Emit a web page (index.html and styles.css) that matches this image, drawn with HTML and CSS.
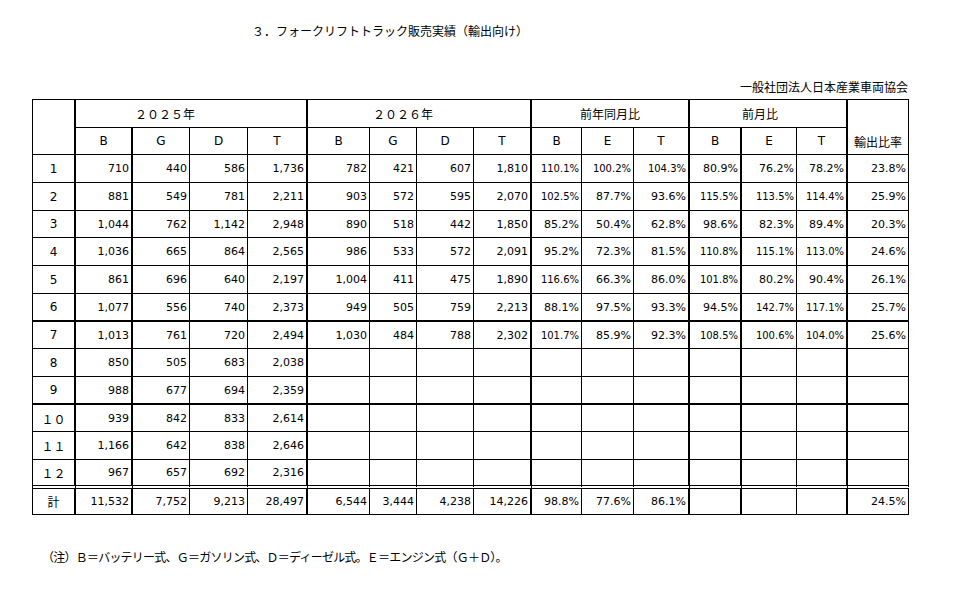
FILE: index.html
```html
<!DOCTYPE html>
<html lang="ja">
<head>
<meta charset="utf-8">
<title>フォークリフトトラック販売実績（輸出向け）</title>
<link rel="stylesheet" href="styles.css">
</head>
<body>
<div class="page">
  <h1 class="title">３．フォークリフトトラック販売実績（輸出向け）</h1>
  <div class="source">一般社団法人日本産業車両協会</div>
  <table class="sales">
    <colgroup>
      <col class="w43"><col class="w57"><col class="w57"><col class="w58"><col class="w60">
      <col class="w62"><col class="w47"><col class="w57"><col class="w58">
      <col class="w50"><col class="w52"><col class="w56">
      <col class="w52"><col class="w55"><col class="w51">
      <col class="w61">
    </colgroup>
    <thead>
      <tr class="hr1">
        <th rowspan="2" class="k"></th>
        <th colspan="4" class="k grp y25">２０２５年</th>
        <th colspan="4" class="k grp y26">２０２６年</th>
        <th colspan="3" class="k grp">前年同月比</th>
        <th colspan="3" class="k grp pm">前月比</th>
        <th rowspan="2" class="grp ratio">輸出比率</th>
      </tr>
      <tr class="hr2">
        <th class="k">B</th><th>G</th><th>D</th><th class="k">T</th>
        <th>B</th><th>G</th><th>D</th><th class="k">T</th>
        <th>B</th><th>E</th><th class="k">T</th>
        <th class="k">B</th><th>E</th><th class="k">T</th>
      </tr>
    </thead>
    <tbody>
      <tr class="r28"><td>1</td><td>710</td><td>440</td><td>586</td><td>1,736</td><td>782</td><td>421</td><td>607</td><td>1,810</td><td class="s">110.1%</td><td class="s">100.2%</td><td class="s">104.3%</td><td>80.9%</td><td>76.2%</td><td>78.2%</td><td>23.8%</td></tr>
      <tr class="r28"><td>2</td><td>881</td><td>549</td><td>781</td><td>2,211</td><td>903</td><td>572</td><td>595</td><td>2,070</td><td class="s">102.5%</td><td>87.7%</td><td>93.6%</td><td class="s">115.5%</td><td class="s">113.5%</td><td class="s">114.4%</td><td>25.9%</td></tr>
      <tr class="r27"><td>3</td><td>1,044</td><td>762</td><td>1,142</td><td>2,948</td><td>890</td><td>518</td><td>442</td><td>1,850</td><td>85.2%</td><td>50.4%</td><td>62.8%</td><td>98.6%</td><td>82.3%</td><td>89.4%</td><td>20.3%</td></tr>
      <tr class="r28"><td>4</td><td>1,036</td><td>665</td><td>864</td><td>2,565</td><td>986</td><td>533</td><td>572</td><td>2,091</td><td>95.2%</td><td>72.3%</td><td>81.5%</td><td class="s">110.8%</td><td class="s">115.1%</td><td class="s">113.0%</td><td>24.6%</td></tr>
      <tr class="r28"><td>5</td><td>861</td><td>696</td><td>640</td><td>2,197</td><td>1,004</td><td>411</td><td>475</td><td>1,890</td><td class="s">116.6%</td><td>66.3%</td><td>86.0%</td><td class="s">101.8%</td><td>80.2%</td><td>90.4%</td><td>26.1%</td></tr>
      <tr class="r28 thick"><td>6</td><td>1,077</td><td>556</td><td>740</td><td>2,373</td><td>949</td><td>505</td><td>759</td><td>2,213</td><td>88.1%</td><td>97.5%</td><td>93.3%</td><td>94.5%</td><td class="s">142.7%</td><td class="s">117.1%</td><td>25.7%</td></tr>
      <tr class="r27"><td>7</td><td>1,013</td><td>761</td><td>720</td><td>2,494</td><td>1,030</td><td>484</td><td>788</td><td>2,302</td><td class="s">101.7%</td><td>85.9%</td><td>92.3%</td><td class="s">108.5%</td><td class="s">100.6%</td><td class="s">104.0%</td><td>25.6%</td></tr>
      <tr class="r28"><td>8</td><td>850</td><td>505</td><td>683</td><td>2,038</td><td></td><td></td><td></td><td></td><td></td><td></td><td></td><td></td><td></td><td></td><td></td></tr>
      <tr class="r28 thick"><td>9</td><td>988</td><td>677</td><td>694</td><td>2,359</td><td></td><td></td><td></td><td></td><td></td><td></td><td></td><td></td><td></td><td></td><td></td></tr>
      <tr class="r27"><td>１０</td><td>939</td><td>842</td><td>833</td><td>2,614</td><td></td><td></td><td></td><td></td><td></td><td></td><td></td><td></td><td></td><td></td><td></td></tr>
      <tr class="r28"><td>１１</td><td>1,166</td><td>642</td><td>838</td><td>2,646</td><td></td><td></td><td></td><td></td><td></td><td></td><td></td><td></td><td></td><td></td><td></td></tr>
      <tr class="r29 dbl"><td>１２</td><td>967</td><td>657</td><td>692</td><td>2,316</td><td></td><td></td><td></td><td></td><td></td><td></td><td></td><td></td><td></td><td></td><td></td></tr>
      <tr class="r26"><td>計</td><td>11,532</td><td>7,752</td><td>9,213</td><td>28,497</td><td>6,544</td><td>3,444</td><td>4,238</td><td>14,226</td><td>98.8%</td><td>77.6%</td><td>86.1%</td><td></td><td></td><td></td><td>24.5%</td></tr>
    </tbody>
  </table>
  <p class="note">（注）Ｂ＝バッテリー式、Ｇ＝ガソリン式、Ｄ＝ディーゼル式。Ｅ＝エンジン式（Ｇ＋Ｄ）。</p>
</div>
</body>
</html>
```
FILE: styles.css
```css
body {
  margin: 0;
  background: #fff;
  color: #000;
  font-family: "DejaVu Sans", "Noto Sans CJK JP", sans-serif;
}

.page {
  width: 877px;
  padding: 23px 0 0 32px;
}

.title {
  margin: 0;
  padding-left: 220px;
  font: normal 12px/16px "Noto Sans CJK JP", sans-serif;
}

.source {
  margin-top: 40px;
  padding-right: 1px;
  text-align: right;
  font: 12px/16px "Noto Sans CJK JP", sans-serif;
}

.sales {
  margin-top: 4px;
  width: 877px;
  table-layout: fixed;
  border-collapse: separate;
  border-spacing: 0;
  border-top: 1px solid #000;
  border-left: 1px solid #000;
}

.w43 { width: 43px; }
.w47 { width: 47px; }
.w50 { width: 50px; }
.w51 { width: 51px; }
.w52 { width: 52px; }
.w55 { width: 55px; }
.w56 { width: 56px; }
.w57 { width: 57px; }
.w58 { width: 58px; }
.w60 { width: 60px; }
.w61 { width: 61px; }
.w62 { width: 62px; }

.sales th,
.sales td {
  border-right: 1px solid #000;
  border-bottom: 1px solid #000;
  padding: 0 2px 0 0;
  white-space: nowrap;
  overflow: hidden;
  vertical-align: middle;
}

.sales th {
  font-weight: normal;
  font-size: 12px;
  text-align: center;
  padding: 0;
}

.sales th.k { border-right-width: 2px; }

.hr1 { height: 28px; }
.hr2 { height: 27px; }

.grp { font-family: "Noto Sans CJK JP", sans-serif; }
.y25 { padding-right: 52px !important; }
.y26 { padding-right: 32px !important; }
.pm { padding-right: 16px !important; }
.ratio {
  vertical-align: bottom !important;
  padding-bottom: 4px !important;
  line-height: 16px;
}

.sales td {
  font-size: 11px;
  text-align: right;
}

.sales td:first-child {
  text-align: center;
  padding: 0;
  font-size: 12px;
}

.sales td.s { font-size: 10px; }

.sales tbody td:nth-child(1),
.sales tbody td:nth-child(2),
.sales tbody td:nth-child(5),
.sales tbody td:nth-child(9),
.sales tbody td:nth-child(12),
.sales tbody td:nth-child(13),
.sales tbody td:nth-child(15) {
  border-right-width: 2px;
}

.r26 { height: 26px; }
.r27 { height: 27px; }
.r28 { height: 28px; }
.r29 { height: 29px; }

.thick td { border-bottom-width: 2px; }
.dbl td { border-bottom: 4px double #000; }

.note {
  margin: 34px 0 0;
  padding-left: 10px;
  font: 12px/16px "Noto Sans CJK JP", sans-serif;
  letter-spacing: -0.77px;
}
```
